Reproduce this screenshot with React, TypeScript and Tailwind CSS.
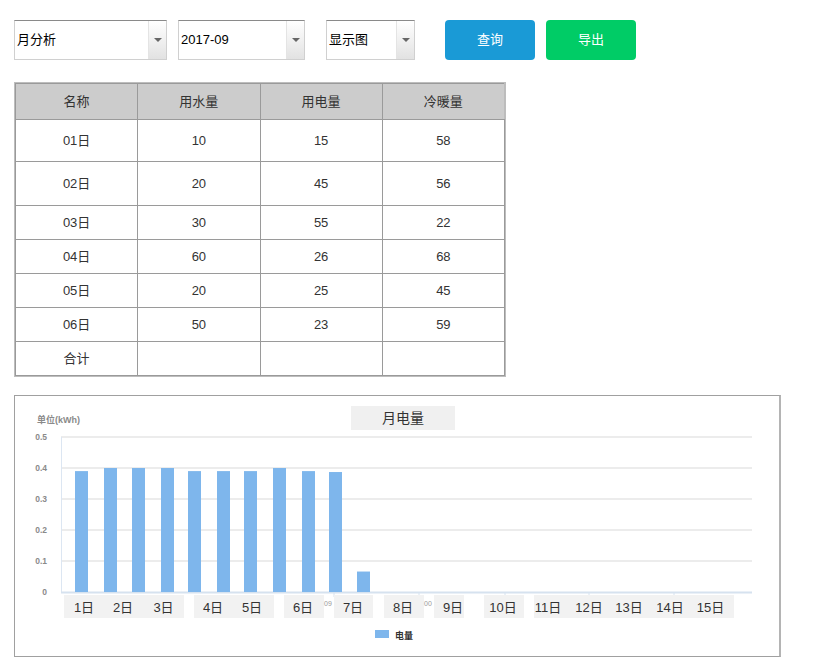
import React from "react";

const rows = [
  { name: "01日", water: "10", power: "15", heat: "58", h: "h-[42px]" },
  { name: "02日", water: "20", power: "45", heat: "56", h: "h-[44px]" },
  { name: "03日", water: "30", power: "55", heat: "22", h: "h-[34px]" },
  { name: "04日", water: "60", power: "26", heat: "68", h: "h-[34px]" },
  { name: "05日", water: "20", power: "25", heat: "45", h: "h-[34px]" },
  { name: "06日", water: "50", power: "23", heat: "59", h: "h-[34px]" },
];

// bar x (chart coords) and kWh value
const bars = [
  [60, 0.39], [89, 0.4], [117, 0.4], [146, 0.4], [173, 0.39], [202, 0.39],
  [229, 0.39], [258, 0.4], [287, 0.39], [314, 0.387], [342, 0.066],
];

const labelBoxes = [
  [49, 120], [179, 80], [269, 40], [319, 39], [369, 40], [419, 30], [469, 40], [519, 200],
];

const labels = [
  ["1日", 69], ["2日", 108], ["3日", 148.5], ["4日", 198], ["5日", 237], ["6日", 288],
  ["7日", 338], ["8日", 388], ["9日", 438], ["10日", 488], ["11日", 533], ["12日", 574],
  ["13日", 614], ["14日", 655], ["15日", 695.5],
];

const Select = ({ value, width }: { value: string; width: string }) => (
  <div className={`flex h-[40px] ${width} border border-[#d0d0d0] border-t-[#8a8a8a] bg-white`}>
    <div className="flex flex-1 items-center pl-[2px] text-[13px] text-black">{value}</div>
    <div className="flex w-[18px] items-center justify-center border-l border-[#e4e4e4] bg-gradient-to-b from-white to-[#e2e2e2]">
      <div className="h-0 w-0 border-x-[4px] border-t-[4px] border-x-transparent border-t-[#666]" />
    </div>
  </div>
);

const cell = "border border-[#9a9a9a] text-center";

const App = () => {
  return (
    <div
      className="min-h-screen bg-white pl-[14px] pt-[20px] text-[#333]"
      style={{ fontFamily: '"Liberation Sans", "Noto Sans CJK SC", sans-serif' }}
    >
      {/* ============ toolbar ============ */}
      <div className="flex items-center">
        <Select value="月分析" width="w-[153px]" />
        <div className="ml-[11px]">
          <Select value="2017-09" width="w-[127px]" />
        </div>
        <div className="ml-[21px]">
          <Select value="显示图" width="w-[89px]" />
        </div>
        <button className="ml-[30px] h-[40px] w-[90px] rounded-[4px] bg-[#1a9ad6] text-[13px] text-white">
          查询
        </button>
        <button className="ml-[11px] h-[40px] w-[90px] rounded-[4px] bg-[#00cc66] text-[13px] text-white">
          导出
        </button>
      </div>

      {/* ============ table ============ */}
      <div className="mt-[22px] w-[492px] border border-[#bdbdbd]">
        <table className="w-full table-fixed border-collapse text-[13px]">
          <thead>
            <tr className="h-[36px] bg-[#cccccc]">
              <th className={`${cell} font-normal`}>名称</th>
              <th className={`${cell} font-normal`}>用水量</th>
              <th className={`${cell} font-normal`}>用电量</th>
              <th className={`${cell} border-r-[#bcbcbc] font-normal`}>冷暖量</th>
            </tr>
          </thead>
          <tbody>
            {rows.map((r) => (
              <tr key={r.name} className={r.h}>
                <td className={cell}>{r.name}</td>
                <td className={cell}>{r.water}</td>
                <td className={cell}>{r.power}</td>
                <td className={`${cell} border-l-[#c4c4c4]`}>{r.heat}</td>
              </tr>
            ))}
            <tr className="h-[34px]">
              <td className={cell}>合计</td>
              <td className={cell}></td>
              <td className={cell}></td>
              <td className={`${cell} border-l-[#c4c4c4]`}></td>
            </tr>
          </tbody>
        </table>
      </div>

      {/* ============ chart ============ */}
      <div className="mt-[18px] h-[262px] w-[767px] border border-[#a0a0a0] border-r-2 border-r-[#b4b4b4] bg-white">
        <svg width="764" height="260" className="block">
          <rect x="336" y="10" width="104" height="24" fill="#f0f0f0" />
          <text x="388" y="27" textAnchor="middle" fontSize="14" fill="#333">月电量</text>
          <text x="22" y="27" fontSize="9" fontWeight="600" fill="#8a8a8a">单位(kWh)</text>

          {[0.5, 0.4, 0.3, 0.2, 0.1, 0].map((v, i) => (
            <g key={v}>
              {i < 5 && <line x1="46" x2="737" y1={41 + i * 31} y2={41 + i * 31} stroke="#e6e6e6" strokeWidth="1.5" />}
              <text x="32" y={44 + i * 31} textAnchor="end" fontSize="8.5" fontWeight="700" fill="#8a8a8a">
                {v === 0 ? "0" : v.toFixed(1)}
              </text>
            </g>
          ))}
          <line x1="46.5" x2="46.5" y1="41" y2="196" stroke="#dce6f2" strokeWidth="1" />
          <line x1="46" x2="737" y1="196.5" y2="196.5" stroke="#d6e2ef" strokeWidth="2" />
          {[319, 404, 490, 574, 659].map((x) => (
            <line key={x} x1={x} x2={x} y1="196" y2="201" stroke="#d6e2ef" strokeWidth="1" />
          ))}

          {bars.map(([x, v]) => (
            <rect key={x} x={x} y={196 - v * 310} width="13" height={v * 310} fill="#7eb6ec" />
          ))}

          {labelBoxes.map(([x, w]) => (
            <rect key={x} x={x} y="199" width={w} height="23" fill="#f2f2f2" />
          ))}
          <text x="309" y="210" fontSize="7" fill="#999">09</text>
          <text x="409" y="210" fontSize="7" fill="#999">00</text>
          {labels.map(([t, x]) => (
            <text key={t} x={x} y="216" textAnchor="middle" fontSize="13" fill="#333">{t}</text>
          ))}

          <rect x="360" y="234" width="14" height="8" fill="#7eb6ec" />
          <text x="380" y="243" fontSize="9" fontWeight="700" fill="#333">电量</text>
        </svg>
      </div>
    </div>
  );
};

export default App;
